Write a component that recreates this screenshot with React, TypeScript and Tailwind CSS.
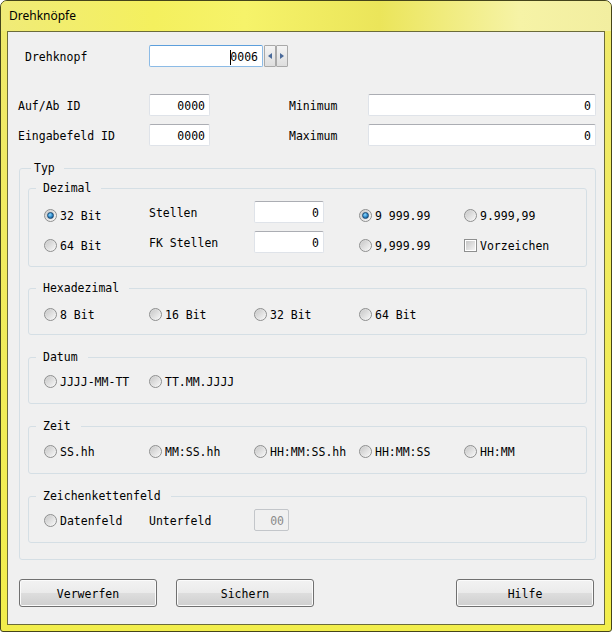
import React from 'react';

type FieldProps = { w: string; value: string; focus?: boolean; disabled?: boolean };

const Field = ({ w, value, focus, disabled }: FieldProps) => {
  const look = focus
    ? 'bg-white border-[#8cbbe6] border-t-[#5c9fdc]'
    : disabled
      ? 'bg-[#f0f0f0] border-[#c3c6ca] text-[#8a8a8a]'
      : 'bg-white border-[#dfe3e9] border-t-[#abadb3]';
  return (
    <div className={`${w} ${look} h-[22px] shrink-0 flex items-center justify-end pr-[4px] rounded-[2px] border`}>
      {focus && <span className="w-px h-[15px] mt-[2px] bg-black -mr-px relative z-10" />}
      <span className="pt-[2px]">{value}</span>
    </div>
  );
};

type RadioProps = { label: string; checked?: boolean; w?: string; className?: string };

const Radio = ({ label, checked, w = 'w-[105px]', className = '' }: RadioProps) => (
  <div className={`${w} ${className} shrink-0 flex items-center`}>
    <span className="w-[13px] h-[13px] rounded-full border border-[#8e8f8f] bg-[linear-gradient(135deg,#cfcfcf,#fbfbfb)] flex items-center justify-center shrink-0">
      <span className="w-[9px] h-[9px] rounded-full bg-[linear-gradient(135deg,#c9c9c9,#f5f5f5)] flex items-center justify-center">
        {checked && (
          <span className="w-[7px] h-[7px] rounded-full border border-[#1b4a73] bg-[radial-gradient(circle_at_40%_35%,#8fdcff,#2b85c8_55%,#10426f)]" />
        )}
      </span>
    </span>
    <span className="ml-[3px] pt-[1px]">{label}</span>
  </div>
);

const Check = ({ label, className = '' }: { label: string; className?: string }) => (
  <div className={`${className} flex items-center shrink-0`}>
    <span className="w-[13px] h-[13px] border border-[#8e8f8f] bg-white flex items-center justify-center shrink-0">
      <span className="w-[9px] h-[9px] bg-[linear-gradient(135deg,#c6c6c6,#f3f3f3)]" />
    </span>
    <span className="ml-[3px] pt-[1px]">{label}</span>
  </div>
);

const Btn = ({ label, className = '' }: { label: string; className?: string }) => (
  <button className={`${className} w-[138px] h-[28px] pt-[1px] shrink-0 rounded-[3px] border border-[#707070] bg-[linear-gradient(180deg,#f2f2f2_0%,#ebebeb_48%,#dddddd_52%,#cfcfcf_100%)] shadow-[inset_0_0_0_1px_#fbfbfb] text-black`}>
    {label}
  </button>
);

const SpinArrow = ({ dir }: { dir: 'l' | 'r' }) => (
  <div className="w-[12px] h-[22px] border border-[#a9a9a9] rounded-[1px] bg-[linear-gradient(180deg,#f4f4f4,#dedede)] flex items-center justify-center">
    <svg width="4" height="6" viewBox="0 0 4 6">
      <path d={dir === 'l' ? 'M4 0 L0 3 L4 6 Z' : 'M0 0 L4 3 L0 6 Z'} fill="#4a6a9a" />
    </svg>
  </div>
);

export default function App() {
  return (
    <div className="w-[612px] h-[632px] rounded-t-[7px] rounded-b-[3px] border border-[#45451a] bg-[linear-gradient(180deg,#efe96c,#f2ee4c)] flex flex-col overflow-hidden">
      {/* title bar */}
      <div className="h-[30px] shrink-0 pl-[8px] pt-[7px] bg-[linear-gradient(90deg,#f0eb78_0%,#f4f05e_25%,#f6f36a_40%,#ebe55a_62%,#f6f3a6_85%,#f2eea0_100%)] font-['Noto_Sans',sans-serif] text-[12px] leading-[16px] text-black">
        Drehknöpfe
      </div>

      {/* client area */}
      <div className="mx-[6px] h-[594px] shrink-0 border border-[#6b6b3a] bg-[#f0f0f0] font-['DejaVu_Sans_Mono',monospace] text-[11.5px] leading-[14px] text-black flex flex-col">
        <div className="mt-[13px] h-[22px] pl-[17px] flex items-center">
          <span className="w-[124px] shrink-0 pt-[2px]">Drehknopf</span>
          <Field w="w-[114px]" value="0006" focus />
          <div className="ml-[1px] flex">
            <SpinArrow dir="l" />
            <SpinArrow dir="r" />
          </div>
        </div>

        <div className="mt-[27px] h-[22px] pl-[10px] flex items-center">
          <span className="w-[131px] shrink-0 pt-[2px]">Auf/Ab ID</span>
          <Field w="w-[61px]" value="0000" />
          <span className="ml-[79px] w-[79px] shrink-0 pt-[2px]">Minimum</span>
          <Field w="w-[228px]" value="0" />
        </div>

        <div className="mt-[8px] h-[22px] pl-[10px] flex items-center">
          <span className="w-[131px] shrink-0 pt-[2px]">Eingabefeld ID</span>
          <Field w="w-[61px]" value="0000" />
          <span className="ml-[79px] w-[79px] shrink-0 pt-[2px]">Maximum</span>
          <Field w="w-[228px]" value="0" />
        </div>

        {/* Typ */}
        <fieldset className="mt-[15px] ml-[11px] mr-[8px] border border-[#d5dfe5] rounded-[3px] pt-[6px] pb-[16px] px-[8px]">
          <legend className="ml-[3px] pl-[3px] pr-[9px] leading-[14px]">Typ</legend>

          <fieldset className="border border-[#d5dfe5] rounded-[3px] pt-[6px] pb-[13px]">
            <legend className="ml-[7px] pl-[7px] pr-[10px] leading-[14px]">Dezimal</legend>
            <div className="pl-[15px]">
              <div className="h-[22px] flex items-center">
                <Radio label="32 Bit" checked className="mt-[6px]" />
                <span className="w-[105px] shrink-0 pt-[2px]">Stellen</span>
                <Field w="w-[70px]" value="0" />
                <div className="ml-[35px] mt-[6px] flex">
                  <Radio label="9 999.99" checked />
                  <Radio label="9.999,99" />
                </div>
              </div>
              <div className="mt-[8px] h-[22px] flex items-center">
                <Radio label="64 Bit" className="mt-[6px]" />
                <span className="w-[105px] shrink-0 pt-[2px]">FK Stellen</span>
                <Field w="w-[70px]" value="0" />
                <div className="ml-[35px] mt-[6px] flex">
                  <Radio label="9,999.99" />
                  <Check label="Vorzeichen" />
                </div>
              </div>
            </div>
          </fieldset>

          <fieldset className="mt-[14px] border border-[#d5dfe5] rounded-[3px] pt-[8px] pb-[9px]">
            <legend className="ml-[7px] pl-[7px] pr-[10px] leading-[14px]">Hexadezimal</legend>
            <div className="pl-[15px] h-[22px] flex items-center">
              <Radio label="8 Bit" />
              <Radio label="16 Bit" />
              <Radio label="32 Bit" />
              <Radio label="64 Bit" />
            </div>
          </fieldset>

          <fieldset className="mt-[15px] border border-[#d5dfe5] rounded-[3px] pt-[6px] pb-[11px]">
            <legend className="ml-[7px] pl-[7px] pr-[10px] leading-[14px]">Datum</legend>
            <div className="pl-[15px] h-[22px] flex items-center">
              <Radio label="JJJJ-MM-TT" />
              <Radio label="TT.MM.JJJJ" />
            </div>
          </fieldset>

          <fieldset className="mt-[15px] border border-[#d5dfe5] rounded-[3px] pt-[7px] pb-[11px]">
            <legend className="ml-[7px] pl-[7px] pr-[10px] leading-[14px]">Zeit</legend>
            <div className="pl-[15px] h-[22px] flex items-center">
              <Radio label="SS.hh" />
              <Radio label="MM:SS.hh" />
              <Radio label="HH:MM:SS.hh" />
              <Radio label="HH:MM:SS" />
              <Radio label="HH:MM" />
            </div>
          </fieldset>

          <fieldset className="mt-[15px] border border-[#d5dfe5] rounded-[3px] pt-[6px] pb-[11px]">
            <legend className="ml-[7px] pl-[7px] pr-[10px] leading-[14px]">Zeichenkettenfeld</legend>
            <div className="pl-[15px] h-[22px] flex items-center">
              <Radio label="Datenfeld" />
              <span className="w-[105px] shrink-0 pt-[2px]">Unterfeld</span>
              <Field w="w-[35px]" value="00" disabled />
            </div>
          </fieldset>
        </fieldset>

        <div className="mt-[19px] pl-[11px] flex">
          <Btn label="Verwerfen" />
          <Btn label="Sichern" className="ml-[19px]" />
          <Btn label="Hilfe" className="ml-[142px]" />
        </div>
      </div>
    </div>
  );
}
